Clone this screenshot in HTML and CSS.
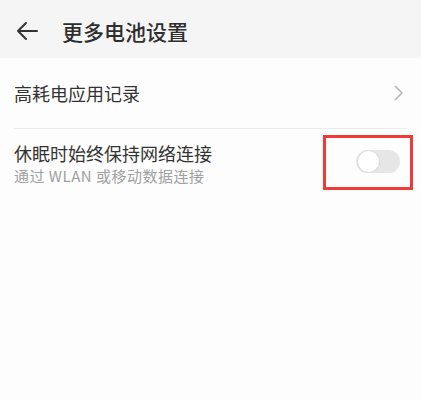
FILE: index.html
```html
<!DOCTYPE html>
<html lang="zh-CN">
<head>
  <meta charset="UTF-8">
  <meta name="viewport" content="width=device-width, initial-scale=1.0">
  <title>更多电池设置</title>
  <link rel="stylesheet" href="styles.css">
</head>
<body>
  <header class="topbar">
    <svg class="back" width="22" height="20" viewBox="0 0 22 20">
      <path d="M21 10H2M10 2L2 10l8 8" fill="none" stroke="#333" stroke-width="2" stroke-linecap="round" stroke-linejoin="round"/>
    </svg>
    <h1 class="title">更多电池设置</h1>
  </header>

  <main class="list">
    <div class="item item-link">
      <div class="item-title">高耗电应用记录</div>
      <svg class="chevron" width="9" height="16" viewBox="0 0 9 16">
        <path d="M1 1l7 7-7 7" fill="none" stroke="#b5b5b5" stroke-width="1.5" stroke-linejoin="round"/>
      </svg>
    </div>
    <div class="divider"></div>
    <div class="item item-switch">
      <div class="item-text">
        <div class="item-title">休眠时始终保持网络连接</div>
        <div class="item-sub">通过 WLAN 或移动数据连接</div>
      </div>
      <div class="switch"><span class="knob"></span></div>
      <div class="mark"></div>
    </div>
  </main>
</body>
</html>
```

FILE: styles.css
```css
body {
  margin: 0;
  font-family: "Noto Sans CJK SC", "Noto Sans", sans-serif;
  background: #fdfdfd;
  color: #333;
  min-height: 400px;
}

.topbar {
  display: flex;
  align-items: center;
  height: 58px;
  padding: 4px 0 0 16px;
  box-sizing: border-box;
  background: #f5f5f5;
}

.back {
  display: block;
}

.title {
  margin: 0 0 0 24px;
  font-size: 21px;
  font-weight: 500;
  color: #2e2e2e;
  line-height: 1;
}

.list {
  padding: 0 14px;
}

.item {
  display: flex;
  align-items: center;
  position: relative;
}

.item-link {
  height: 70px;
  justify-content: space-between;
}

.item-title {
  font-size: 18px;
  line-height: 24px;
  color: #333;
}

.chevron {
  display: block;
  margin-right: 4px;
}

.divider {
  height: 1px;
  background: #ececec;
}

.item-switch {
  padding-top: 12px;
  justify-content: space-between;
}

.item-sub {
  font-size: 15px;
  line-height: 22px;
  letter-spacing: 0.5px;
  color: #a0a0a0;
}

.switch {
  align-self: flex-start;
  width: 44px;
  height: 23px;
  border-radius: 12px;
  background: #e6e6e6;
  margin: 9px 7px 0 0;
  position: relative;
}

.knob {
  position: absolute;
  left: 1px;
  top: 0;
  width: 21px;
  height: 21px;
  border-radius: 50%;
  background: #fff;
  border: 1px solid #d9d9d9;
}

.mark {
  position: absolute;
  left: 309px;
  top: 6px;
  width: 84px;
  height: 49px;
  border: 3px solid #f03a3a;
}
```
